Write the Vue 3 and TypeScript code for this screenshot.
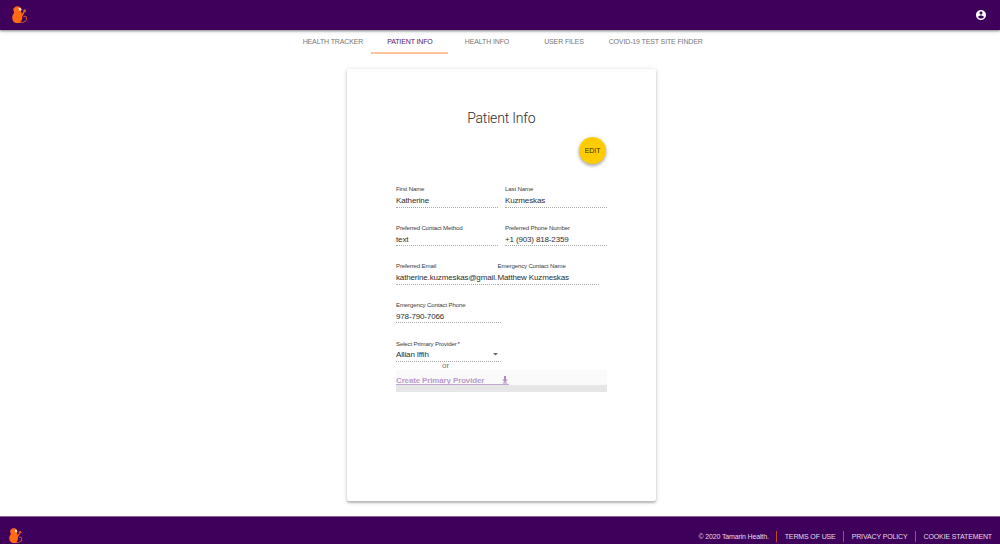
<script setup lang="ts">
interface Field {
  label: string
  value: string
}

const tabs: string[] = ['Health Tracker', 'Patient Info', 'Health Info', 'User Files', 'COVID-19 Test Site Finder']
const activeTab = 'Patient Info'

const rows: { kind: string; fields: Field[] }[] = [
  {
    kind: 'spaced',
    fields: [
      { label: 'First Name', value: 'Katherine' },
      { label: 'Last Name', value: 'Kuzmeskas' },
    ],
  },
  {
    kind: 'spaced',
    fields: [
      { label: 'Preferred Contact Method', value: 'text' },
      { label: 'Preferred Phone Number', value: '+1 (903) 818-2359' },
    ],
  },
  {
    kind: 'joined',
    fields: [
      { label: 'Preferred Email', value: 'katherine.kuzmeskas@gmail.' },
      { label: 'Emergency Contact Name', value: 'Matthew Kuzmeskas' },
    ],
  },
  { kind: 'single', fields: [{ label: 'Emergency Contact Phone', value: '978-790-7066' }] },
]

const footerLinks: string[] = ['Terms of Use', 'Privacy Policy', 'Cookie Statement']
</script>

<template>
  <div class="page">
    <svg class="defs" width="0" height="0" aria-hidden="true">
      <symbol id="tamarin" viewBox="0 0 16 18">
        <path
          d="M3.300 .8C4.800-.1 7.600 .1 8.900 1.900L9.800 3.500 8.900 5.400C9.800 6.300 9.900 7.400 9.700 8.300L11.600 5.600 12.600 6.400 10.200 10.400C10.500 12.500 9.900 14.600 8.600 15.700L9.600 17H4.200C1.300 16.400-.1 13.600 .3 10.700 .6 8.800 1.800 7.800 2 6.600 2.200 5.400 1 4.300 1.300 2.700Z"
          fill="#ff6a13"
        />
        <path d="M8 16.400C12 17 15 14.600 14.600 11.800 14.200 10.100 12.300 9.900 11.500 11" fill="none" stroke="#c04a35" stroke-width="1.200" />
        <path d="M6.500 2.100 8.600 1.900 9.500 3.600 8.400 5 6.900 4.300Z" fill="#f4dcd8" />
        <circle cx="12.600" cy="4.700" r="1.500" fill="#e05f20" />
      </symbol>
    </svg>

    <header class="topbar">
      <svg class="logo" width="16" height="18"><use href="#tamarin" /></svg>
      <svg class="account" viewBox="2 2 20 20" width="10" height="10">
        <path
          fill="#fff"
          d="M12 2C6.480 2 2 6.480 2 12s4.480 10 10 10 10-4.480 10-10S17.520 2 12 2zm0 3c1.660 0 3 1.340 3 3s-1.340 3-3 3-3-1.340-3-3 1.340-3 3-3zm0 14.200c-2.500 0-4.710-1.280-6-3.220.030-1.990 4-3.080 6-3.080 1.990 0 5.970 1.090 6 3.080-1.290 1.940-3.500 3.220-6 3.220z"
        />
      </svg>
    </header>

    <nav class="tabs">
      <button v-for="tab in tabs" :key="tab" class="tab" :class="{ active: tab === activeTab }">{{ tab }}</button>
    </nav>

    <main class="card">
      <h1 class="title">Patient Info</h1>
      <div class="actions"><button class="edit">Edit</button></div>

      <div v-for="(row, i) in rows" :key="i" class="row" :class="row.kind">
        <div v-for="field in row.fields" :key="field.label" class="field">
          <div class="label">{{ field.label }}</div>
          <div class="value">{{ field.value }}</div>
        </div>
      </div>

      <div class="row single">
        <div class="field">
          <div class="label">Select Primary Provider<span class="star">*</span></div>
          <div class="value select">
            <span>Allian Iffih</span>
            <svg viewBox="0 0 10 5" width="5" height="2.500"><path d="M0 0h10L5 5z" fill="#666" /></svg>
          </div>
        </div>
      </div>

      <div class="or">or</div>
      <div class="create">
        <a class="create-link">
          <span>Create Primary Provider</span>
          <svg viewBox="0 0 12 16" width="6" height="8">
            <path d="M4 0h4v7h3.500L6 13 .5 7H4zM1.500 13h9v2h-9z" fill="#b08cc4" />
          </svg>
        </a>
      </div>
      <div class="strip"></div>
    </main>

    <footer class="footer">
      <svg class="footer-logo" width="14" height="16"><use href="#tamarin" /></svg>
      <span class="copyright">© 2020 Tamarin Health.</span>
      <a v-for="link in footerLinks" :key="link" class="footer-link">{{ link }}</a>
    </footer>
  </div>
</template>

<style>
html,
body {
  overflow: hidden;
  background: #fff;
}
</style>

<style scoped>
.page {
  display: flex;
  flex-direction: column;
  width: 1000px;
  height: 544px;
  overflow: hidden;
  box-sizing: border-box;
  background: #fff;
  font-family: "Liberation Sans", Arial, Helvetica, sans-serif;
  color: #333;
}
.page * {
  box-sizing: border-box;
}
.defs {
  position: absolute;
}
button {
  border: 0;
  padding: 0;
  background: none;
  font-family: inherit;
}
.topbar {
  flex: none;
  display: flex;
  justify-content: space-between;
  height: 30px;
  padding: 6px 14px 0 12px;
  background: #3e005b;
  box-shadow: 0 1px 2px rgba(0, 0, 0, 0.4), 0 2px 4px rgba(0, 0, 0, 0.12);
}
.account {
  margin-top: 4px;
}
.tabs {
  flex: none;
  display: flex;
  justify-content: center;
  height: 24px;
  padding-left: 3.400px;
}
.tab {
  width: 77px;
  padding-top: 2px;
  border-bottom: 2px solid transparent;
  font-size: 7px;
  letter-spacing: -0.130px;
  line-height: 20px;
  text-transform: uppercase;
  white-space: nowrap;
  color: #777;
}
.tab:last-child {
  width: 106.500px;
}
.tab.active {
  border-bottom-color: #ffc29b;
  color: #551577;
}
.card {
  flex: none;
  width: 309px;
  height: 432px;
  margin: 15px 0 0 347px;
  padding: 40px 49.500px 0 49px;
  border-radius: 2px;
  background: #fff;
  box-shadow: 0 1.500px 2px rgba(0, 0, 0, 0.2), 0 1px 5px rgba(0, 0, 0, 0.16);
}
.title {
  margin: 0;
  font-family: Roboto, "Liberation Sans", sans-serif;
  font-size: 14px;
  letter-spacing: -0.200px;
  font-weight: 300;
  line-height: 18px;
  text-align: center;
  color: #2c2c2c;
}
.actions {
  display: flex;
  justify-content: flex-end;
  margin: 10px 0 20px;
  padding-right: 0.500px;
}
.edit {
  width: 27px;
  height: 27px;
  border-radius: 50%;
  background: #fc0;
  box-shadow: 0 2px 3px rgba(0, 0, 0, 0.25), 0 1px 5px rgba(0, 0, 0, 0.15);
  font-size: 7px;
  letter-spacing: -0.060px;
  text-transform: uppercase;
  color: #3b3000;
}
.row {
  display: flex;
  height: 38.650px;
}
.spaced {
  gap: 7.500px;
}
.field {
  flex: none;
  width: 101.500px;
}
.single .field {
  width: 105px;
}
.label {
  height: 9px;
  font-size: 6.100px;
  letter-spacing: -0.150px;
  line-height: 9px;
  white-space: nowrap;
  color: #3c3c3c;
}
.star {
  margin-left: 1px;
}
.value {
  height: 14.500px;
  border-bottom: 1px dotted #aaa;
  font-size: 8px;
  letter-spacing: -0.145px;
  line-height: 15px;
  white-space: nowrap;
  color: #2e2e2e;
}
.select {
  display: flex;
  align-items: center;
  justify-content: space-between;
  padding-right: 3px;
}
.or {
  height: 9px;
  margin: -16px 0 0;
  width: 99px;
  font-size: 8px;
  line-height: 10px;
  text-align: center;
  color: #777;
}
.create {
  height: 15px;
  background: #fafafa;
}
.create-link {
  display: flex;
  align-items: center;
  width: 113px;
  height: 15px;
  padding-top: 7px;
  border-bottom: 1px solid #c2a8d1;
  font-size: 8px;
  letter-spacing: -0.145px;
  font-weight: 700;
  line-height: 9px;
  white-space: nowrap;
  color: #b99bcb;
}
.create-link svg {
  flex: none;
  margin: -1px 0 0 18px;
}
.strip {
  height: 7px;
  background: #e6e6e6;
}
.footer {
  flex: none;
  display: flex;
  height: 28px;
  margin-top: 15px;
  padding: 11px 0 0 9px;
  border-top: 1px solid #876798;
  background: #3e005b;
  font-size: 7px;
  letter-spacing: -0.130px;
  line-height: 18px;
  color: #e4dce8;
}
.copyright {
  margin-left: auto;
  margin-right: 7px;
  letter-spacing: -0.150px;
  line-height: 17px;
}
.footer-link {
  height: 11px;
  margin-top: 3px;
  padding: 0 7px 0 8px;
  border-left: 1px solid #c04a2f;
  line-height: 12px;
  text-transform: uppercase;
}
.footer-link:last-child {
  padding-right: 8px;
}
</style>
